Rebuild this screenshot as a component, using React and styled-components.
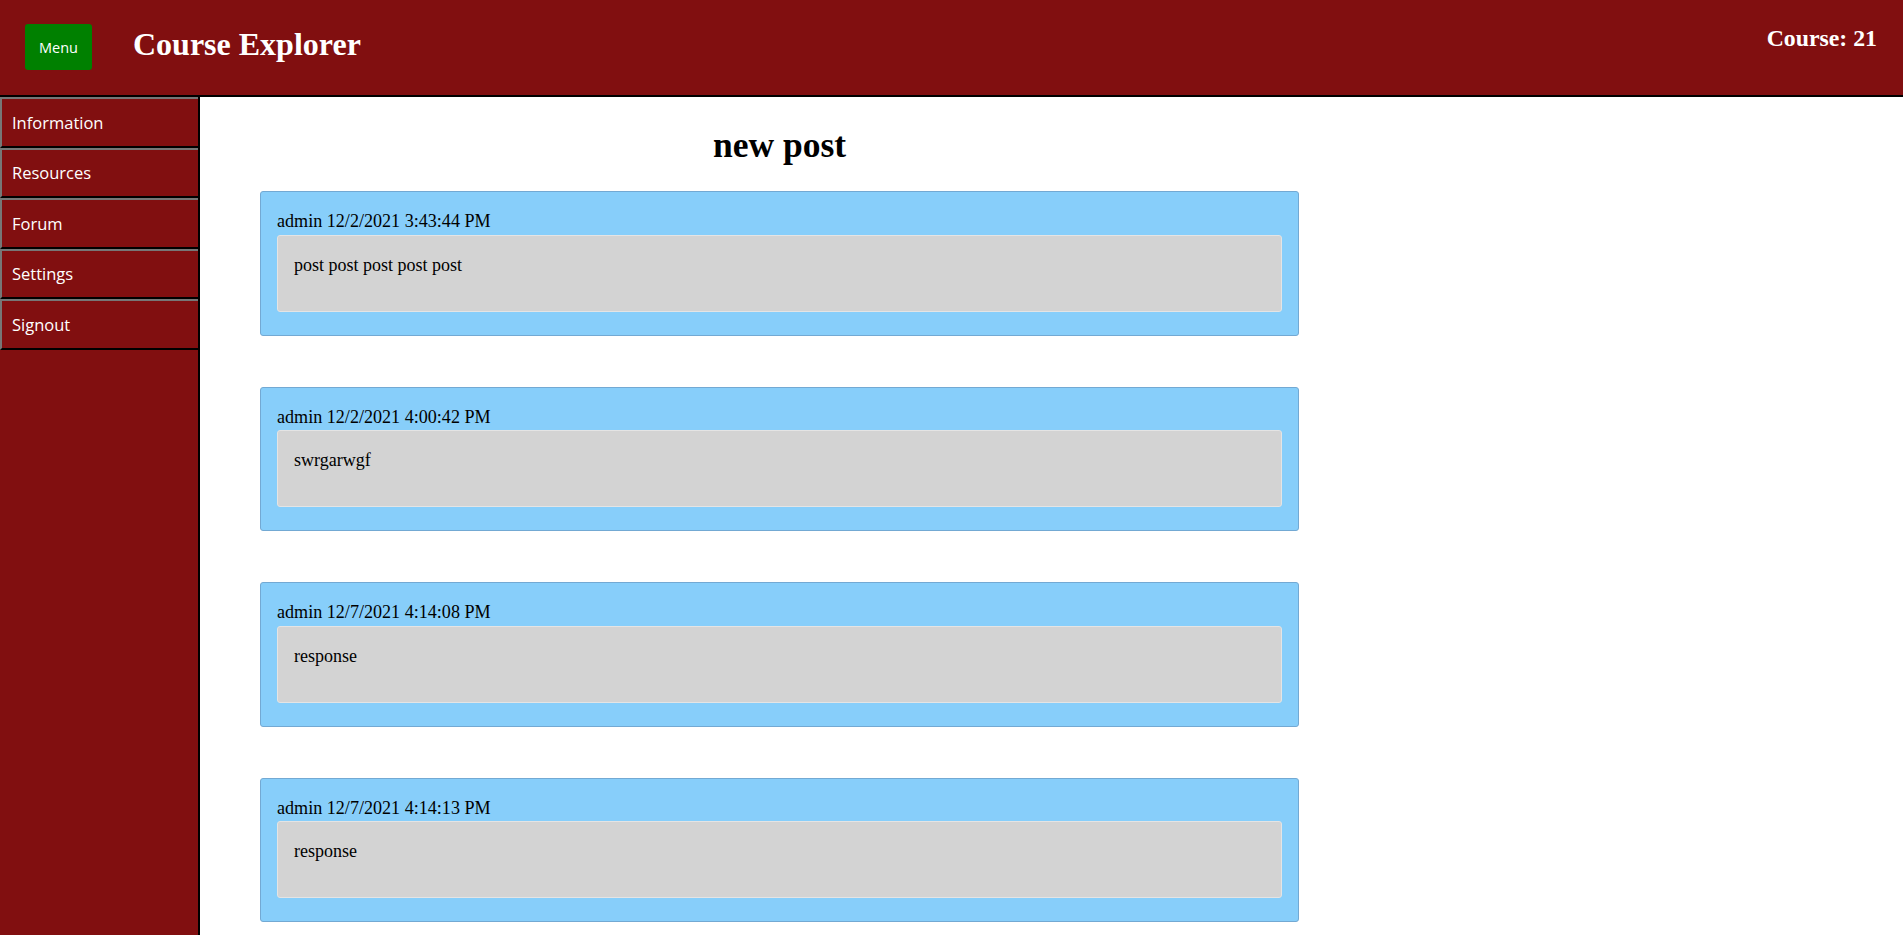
import React from "react";
import styled, { createGlobalStyle } from "styled-components";

const GlobalStyle = createGlobalStyle`
  html, body {
    margin: 0;
    padding: 0;
    background: #ffffff;
    font-family: "Liberation Serif", "Times New Roman", serif;
  }
  * {
    box-sizing: border-box;
  }
`;

const Header = styled.header`
  height: 97px;
  background-color: #810f10;
  border-bottom: 2px solid #000;
  display: flex;
  align-items: flex-start;
  padding: 0 26px 0 25px;
`;

const MenuButton = styled.button`
  margin-top: 24px;
  width: 67px;
  height: 46px;
  background-color: #008000;
  color: #fff;
  border: none;
  border-radius: 3px;
  font-family: "Open Sans", "Liberation Sans", sans-serif;
  font-size: 14.5px;
  cursor: pointer;
  padding: 0;
`;

const Title = styled.h1`
  margin: 0 0 0 41px;
  padding-top: 26px;
  font-size: 32px;
  line-height: 37px;
  font-weight: bold;
  color: #fff;
`;

const CourseLabel = styled.h2`
  margin: 0 0 0 auto;
  padding-top: 24px;
  font-size: 23.8px;
  line-height: 28px;
  font-weight: bold;
  color: #fff;
`;

const Body = styled.div`
  display: flex;
  min-height: calc(100vh - 97px);
`;

const Sidebar = styled.nav`
  width: 200px;
  flex-shrink: 0;
  background-color: #810f10;
  border-right: 2px solid #000;
  display: flex;
  flex-direction: column;
`;

const NavItem = styled.a`
  height: 50.5px;
  display: flex;
  align-items: center;
  padding-left: 10px;
  border-top: 2px solid #777;
  border-left: 2px solid #777;
  border-bottom: 2px solid #000;
  color: #fff;
  text-decoration: none;
  font-family: "Open Sans", "Liberation Sans", sans-serif;
  font-size: 16.5px;
  cursor: pointer;
`;

const Main = styled.main`
  flex: 1;
  padding-left: 60px;
`;

const Column = styled.div`
  width: 1039px;
`;

const PageTitle = styled.h1`
  margin: 29px 0 26px;
  text-align: center;
  font-size: 35.5px;
  line-height: 39px;
  font-weight: bold;
  color: #000;
`;

const PostCard = styled.div`
  background-color: #87cefa;
  border: 1px solid #73a9d3;
  border-radius: 3px;
  padding: 20px 16px 23px;
  margin-bottom: 51px;
`;

const PostMeta = styled.div`
  font-size: 18.1px;
  line-height: 19.5px;
  margin-bottom: 3px;
  color: #000;
`;

const PostBody = styled.div`
  height: 77px;
  background-color: #d3d3d3;
  border: 1px solid #e4e4e4;
  border-radius: 3px;
  padding: 20px 16px 0;
  font-size: 18px;
  line-height: 19.5px;
  color: #000;
`;

const navLinks = ["Information", "Resources", "Forum", "Settings", "Signout"];

const posts = [
  { author: "admin", date: "12/2/2021 3:43:44 PM", text: "post post post post post" },
  { author: "admin", date: "12/2/2021 4:00:42 PM", text: "swrgarwgf" },
  { author: "admin", date: "12/7/2021 4:14:08 PM", text: "response" },
  { author: "admin", date: "12/7/2021 4:14:13 PM", text: "response" },
];

export default function App() {
  return (
    <>
      <GlobalStyle />
      <Header>
        <MenuButton>Menu</MenuButton>
        <Title>Course Explorer</Title>
        <CourseLabel>Course: 21</CourseLabel>
      </Header>
      <Body>
        <Sidebar>
          {navLinks.map((l) => (
            <NavItem key={l}>{l}</NavItem>
          ))}
        </Sidebar>
        <Main>
          <Column>
            <PageTitle>new post</PageTitle>
            {posts.map((p, i) => (
              <PostCard key={i}>
                <PostMeta>
                  {p.author} {p.date}
                </PostMeta>
                <PostBody>{p.text}</PostBody>
              </PostCard>
            ))}
          </Column>
        </Main>
      </Body>
    </>
  );
}
